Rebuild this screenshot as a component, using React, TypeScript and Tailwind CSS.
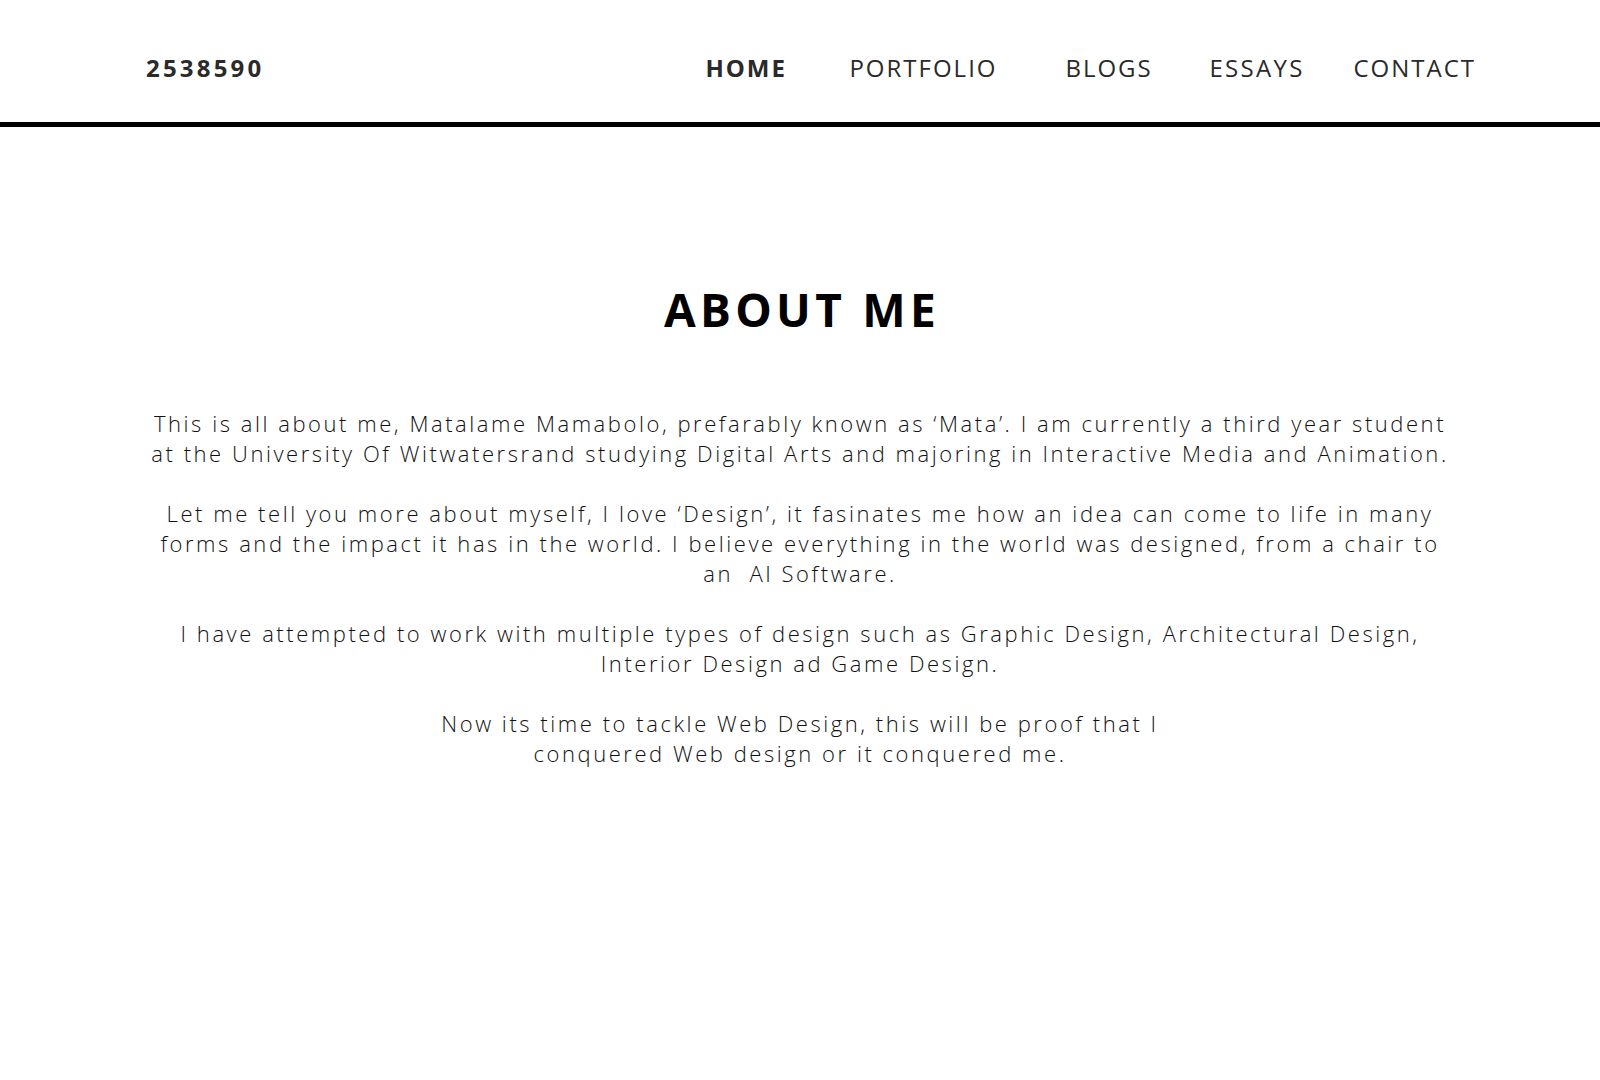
export default function App() {
  return (
    <div className="min-h-screen bg-white text-[#111]" style={{ fontFamily: '"Open Sans", "Liberation Sans", sans-serif' }}>
      <header className="h-[127px] border-b-[5px] border-black px-[146px] pt-[52px]">
        <div className="flex items-start justify-between leading-[32px] text-[24px]">
          <div className="font-bold tracking-[3.2px] text-[#2a2a2a]">2538590</div>
          <nav className="flex mr-[-22px] text-[#2a2a2a]">
            <a className="w-[144px] font-bold tracking-[2px]">HOME</a>
            <a className="w-[216px] tracking-[2px]">PORTFOLIO</a>
            <a className="w-[144px] tracking-[2px]">BLOGS</a>
            <a className="w-[144px] tracking-[2.3px]">ESSAYS</a>
            <a className="tracking-[2px]">CONTACT</a>
          </nav>
        </div>
      </header>

      <main className="flex flex-col items-center pt-[154px]">
        <h1 className="pl-[4px] text-[46px] leading-[56px] font-bold tracking-[4.3px] text-black">ABOUT ME</h1>

        <div className="mt-[71px] flex flex-col gap-[30px] text-center text-[22px] leading-[30px] font-light tracking-[2.55px] whitespace-nowrap">
          <p>
            This is all about me, Matalame Mamabolo, prefarably known as ‘Mata’. I am currently a third year student
            <br />
            at the University Of Witwatersrand studying Digital Arts and majoring in Interactive Media and Animation.
          </p>
          <p>
            Let me tell you more about myself, I love ‘Design’, it fasinates me how an idea can come to life in many
            <br />
            forms and the impact it has in the world. I believe everything in the world was designed, from a chair to
            <br />
            an&nbsp; AI Software.
          </p>
          <p>
            I have attempted to work with multiple types of design such as Graphic Design, Architectural Design,
            <br />
            Interior Design ad Game Design.
          </p>
          <p>
            Now its time to tackle Web Design, this will be proof that I
            <br />
            conquered Web design or it conquered me.
          </p>
        </div>
      </main>
    </div>
  )
}
